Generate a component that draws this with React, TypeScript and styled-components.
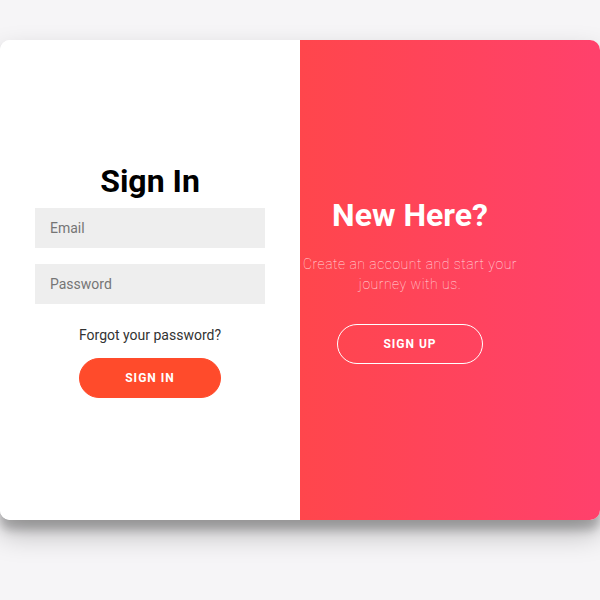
import React from 'react';
import styled, { createGlobalStyle } from 'styled-components';

const GlobalStyle = createGlobalStyle`
  * {
    box-sizing: border-box;
  }

  body {
    background: #f6f5f7;
    font-family: Roboto, "Liberation Sans", sans-serif;
    margin: 0;
  }
`;

const Page = styled.div`
  display: flex;
  justify-content: center;
  padding-top: 40px;
  height: 600px;
`;

const Card = styled.div`
  background: #fff;
  border-radius: 10px;
  box-shadow: 0 14px 28px rgba(0, 0, 0, 0.25), 0 10px 10px rgba(0, 0, 0, 0.22);
  display: grid;
  grid-template-columns: 1fr 1fr;
  height: 480px;
  overflow: hidden;
  width: 600px;
`;

const Form = styled.form`
  align-items: center;
  background: #fff;
  display: flex;
  flex-direction: column;
  justify-content: center;
  padding: 1px 35px 0;
  text-align: center;
`;

const Overlay = styled.div`
  align-items: center;
  background: linear-gradient(to right, #ff464c, #ff416c);
  color: #fff;
  display: flex;
  flex-direction: column;
  justify-content: center;
  padding: 0 80px 0 0;
  text-align: center;
`;

const Title = styled.h1`
  color: ${(p: { light?: boolean }) => (p.light ? '#fff' : '#000')};
  font-size: 32px;
  font-weight: 700;
  line-height: 37px;
  margin: 0;
`;

const Input = styled.input`
  background: #eee;
  border: none;
  font-family: inherit;
  font-size: 14px;
  line-height: 16px;
  margin: 8px 0;
  outline: none;
  padding: 12px 15px;
  width: 100%;

  &::placeholder {
    color: #757575;
  }
`;

const Link = styled.a`
  color: #333;
  font-size: 14px;
  line-height: 16px;
  margin: 15px 0;
  text-decoration: none;
`;

const Button = styled.button<{ ghost?: boolean }>`
  background: ${(p) => (p.ghost ? 'transparent' : '#ff4b2b')};
  border: 1px solid ${(p) => (p.ghost ? '#fff' : '#ff4b2b')};
  border-radius: 20px;
  color: #fff;
  cursor: pointer;
  font-family: inherit;
  font-size: 12px;
  font-weight: 700;
  letter-spacing: 1px;
  line-height: 14px;
  padding: 12px 45px;
  text-transform: uppercase;
`;

const Text = styled.p`
  color: rgba(255, 255, 255, 0.8);
  font-size: 14px;
  font-weight: 100;
  letter-spacing: 0.5px;
  line-height: 20px;
  margin: 20px 0 30px;
  white-space: nowrap;
`;

export default function App() {
  return (
    <>
      <GlobalStyle />
      <Page>
        <Card>
          <Form onSubmit={(e) => e.preventDefault()}>
            <Title>Sign In</Title>
            <Input type="email" placeholder="Email" />
            <Input type="password" placeholder="Password" />
            <Link href="#">Forgot your password?</Link>
            <Button type="submit">Sign In</Button>
          </Form>
          <Overlay>
            <Title light>New Here?</Title>
            <Text>
              Create an account and start your
              <br />
              journey with us.
            </Text>
            <Button ghost>Sign Up</Button>
          </Overlay>
        </Card>
      </Page>
    </>
  );
}
